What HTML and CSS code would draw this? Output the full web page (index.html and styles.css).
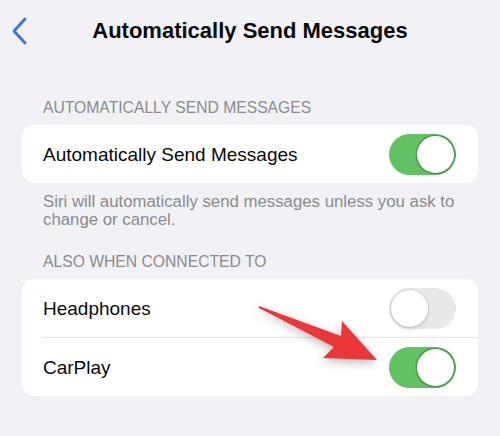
FILE: index.html
```html
<!DOCTYPE html>
<html lang="en">
<head>
<meta charset="utf-8">
<title>Automatically Send Messages</title>
<link rel="stylesheet" href="styles.css">
</head>
<body>
  <header class="nav">
    <span class="back">
      <svg width="18" height="30" viewBox="0 0 18 30" aria-hidden="true">
        <path d="M14 3 L3 15 L14 27" fill="none" stroke="currentColor" stroke-width="3" stroke-linecap="round" stroke-linejoin="round"/>
      </svg>
    </span>
    <h1 class="title">Automatically Send Messages</h1>
    <span></span>
  </header>

  <main class="content">
    <h2 class="group-label first">AUTOMATICALLY SEND MESSAGES</h2>
    <section class="card">
      <div class="row">
        <span class="row-label">Automatically Send Messages</span>
        <span class="toggle on"><span class="knob"></span></span>
      </div>
    </section>
    <p class="group-footer">Siri will automatically send messages unless you ask to change or cancel.</p>

    <h2 class="group-label">ALSO WHEN CONNECTED TO</h2>
    <section class="card">
      <div class="row">
        <span class="row-label">Headphones</span>
        <span class="toggle"><span class="knob"></span></span>
      </div>
      <div class="sep"></div>
      <div class="row">
        <span class="row-label">CarPlay</span>
        <span class="toggle on"><span class="knob"></span></span>
      </div>
    </section>
  </main>

  <!-- callout arrow pointing at the CarPlay switch -->
  <svg class="callout" width="500" height="436" viewBox="0 0 500 436" aria-hidden="true">
    <polygon points="259,306 341,336 342,321 377,360 323,358 334,347 259,308" />
  </svg>
</body>
</html>
```

FILE: styles.css
```css
* {
  box-sizing: border-box;
}

html, body {
  margin: 0;
  padding: 0;
}

body {
  position: relative;
  width: 500px;
  height: 436px;
  overflow: hidden;
  background: #f2f2f6;
  font-family: "Liberation Sans", Arial, sans-serif;
  color: #0a0a0a;
}

/* navigation bar */
.nav {
  display: grid;
  grid-template-columns: 1fr auto 1fr;
  align-items: center;
  height: 60px;
  padding-top: 16px;
  padding-bottom: 16px;
}

.back {
  display: flex;
  align-items: center;
  padding-left: 11px;
  color: #3a7ad6;
}

.title {
  margin: 0;
  font-size: 22px;
  line-height: 28px;
  font-weight: bold;
  color: #0a0a0a;
}

/* grouped list */
.content {
  display: flex;
  flex-direction: column;
}

.group-label {
  margin: 23px 0 7px;
  padding: 0 43px;
  font-size: 15.7px;
  line-height: 20px;
  font-weight: normal;
  color: #8a8a8e;
}

.group-label.first {
  margin-top: 38px;
}

.card {
  margin: 0 22px;
  background: #ffffff;
  border-radius: 12px;
  overflow: hidden;
}

.row {
  display: flex;
  align-items: center;
  justify-content: space-between;
  height: 58px;
  padding: 0 22px 0 21px;
}

.row-label {
  font-size: 19px;
  line-height: 58px;
  padding-top: 1px;
}

.sep {
  height: 1px;
  margin-left: 20px;
  background: #e3e3e7;
}

.group-footer {
  margin: 10px 0 0;
  padding: 0 40px 0 43px;
  font-size: 16.8px;
  line-height: 18px;
  color: #8a8a8e;
}

/* switches */
.toggle {
  display: flex;
  justify-content: flex-start;
  align-items: center;
  width: 67px;
  height: 41px;
  padding: 2px;
  border-radius: 21px;
  background: #e9e9eb;
}

.toggle.on {
  justify-content: flex-end;
  background: #62c263;
}

.knob {
  width: 37px;
  height: 37px;
  border-radius: 50%;
  background: #ffffff;
  box-shadow: 0 0 0 1px rgba(0, 0, 0, 0.07), 0 2px 4px rgba(0, 0, 0, 0.12);
}

.toggle.on .knob {
  box-shadow: 0 0 0 1.5px rgba(40, 110, 40, 0.45);
}

/* annotation overlay */
.callout {
  position: absolute;
  left: 0;
  top: 0;
  pointer-events: none;
  fill: #ea373a;
  filter: drop-shadow(0 3px 5px rgba(0, 0, 0, 0.28));
}
```
